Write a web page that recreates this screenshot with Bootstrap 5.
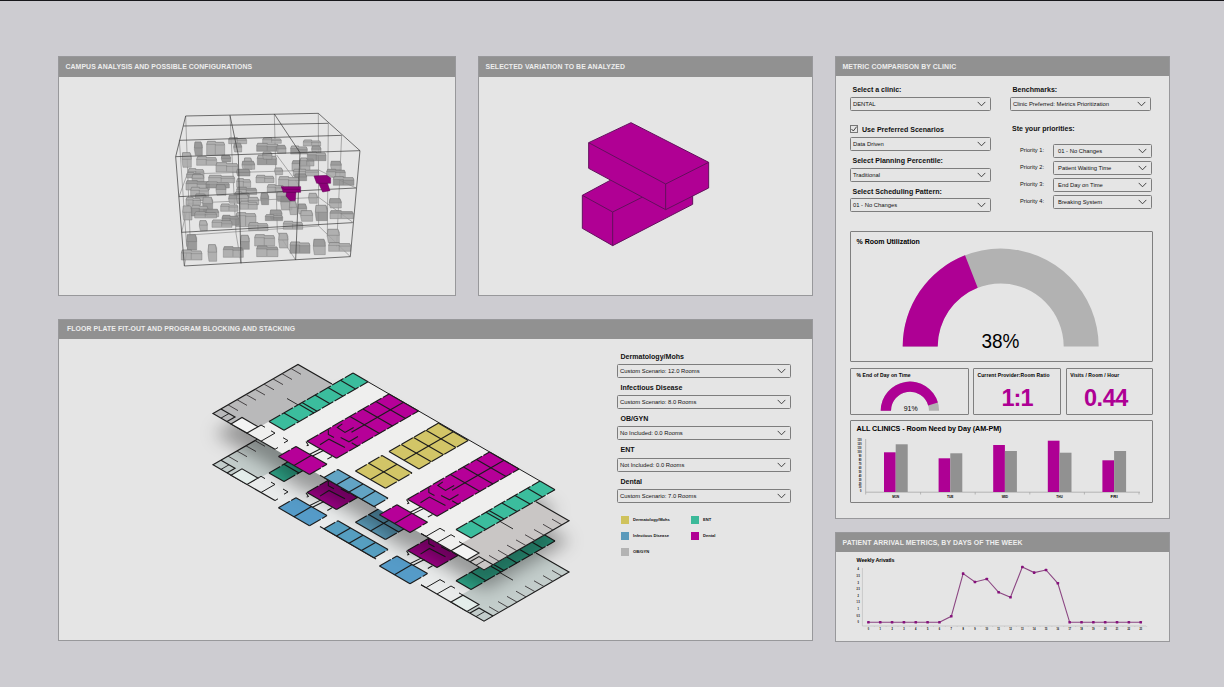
<!DOCTYPE html>
<html lang="en">
<head>
<meta charset="utf-8">
<meta name="viewport" content="width=device-width, initial-scale=1">
<title>Clinic planning dashboard</title>
<link href="https://cdn.jsdelivr.net/npm/bootstrap@5.3.0/dist/css/bootstrap.min.css" rel="stylesheet">
<style>
  body{background:#cdccd1;font-family:"Liberation Sans",Arial,sans-serif;color:#111;width:1224px;height:687px;overflow:hidden;line-height:1}
  .board{border-top:1px solid #17171b;padding:55px 54px 0 58px;height:687px;gap:22px}
  .left-side{width:755px}
  .right-side{width:335px}
  .panel{border:1px solid #98989b;border-radius:0;background:#e5e5e5}
  .panel .card-header{background:#919191;color:#ededed;border:0;border-radius:0;height:19.5px;padding:0 6.5px;font-size:6.9px;letter-spacing:.08px;font-weight:700;line-height:19.5px;white-space:nowrap}
  .p-campus{width:398px;height:240px}
  .p-variation{width:335.5px;height:240px}
  .p-variation .card-header{padding-left:7px}
  .p-floor{width:755px;height:322px;margin-top:23px}
  .p-floor .card-header{padding-left:8px;height:18.5px;line-height:18.5px}
  .p-metric{height:463px}
  .p-metric .card-header{height:19px;line-height:19px}
  .p-arrival{height:110.5px;margin-top:12.5px}
  svg{display:block}
  .pick{height:14px;border:1px solid #7d7d7d;border-radius:1.5px;background:#e5e5e5;font-size:5.85px;color:#111;padding:0 4px 0 2px;line-height:12px;white-space:nowrap;width:100%}
  .cap{font-size:7.05px;font-weight:700;white-space:nowrap;padding-left:2.5px}
  .floor-form{width:174px;margin-left:8px;padding-top:8px}
  .floor-form .cap{height:17.25px;line-height:19px;padding-left:3.5px}
  .legend-key{width:8px;height:8px}
  .legend-row{font-size:4.1px;font-weight:700;height:16.2px}
  .legend-row>div{width:70px;gap:4.5px}
  .metric-left{width:140.5px}
  .metric-right{width:142px}
  .form-zone{padding:0 17px 0 14px;height:155px}
  .prio{height:14px;margin-bottom:2.95px;font-size:5.7px}
  .prio .pick{width:99.5px;padding-left:4.5px}
  .prio span.who{width:25.5px;white-space:nowrap}
  .tick-box{width:8px;height:8px;border:1px solid #777}
  .tile{border:1px solid #7f7f7f;border-radius:1px}
</style>
</head>
<body>
<svg width="0" height="0" class="position-absolute">
  <symbol id="chev" viewBox="0 0 9 6"><path d="M.7.9 4.5 4.8 8.3.9" fill="none" stroke="#333" stroke-width=".9"/></symbol>
</svg>
<main class="board d-flex">
  <div class="left-side">
    <div class="d-flex justify-content-between">
      <section class="card panel p-campus">
        <div class="card-header">CAMPUS ANALYSIS AND POSSIBLE CONFIGURATIONS</div>
        <svg id="campus" width="396" height="218" viewBox="59 77 396 218"></svg>
      </section>
      <section class="card panel p-variation">
        <div class="card-header">SELECTED VARIATION TO BE ANALYZED</div>
        <svg width="333" height="218" viewBox="479 77 333 218">
          <g transform="translate(560 110) scale(.3333)" fill="#b00094" stroke="#62105c" stroke-width="3" stroke-linejoin="round">
            <path d="M67 256 160 206 398 252V283L158 407 67 355Z"/>
            <path d="M67 256 158 306 250 260M158 306V407" fill="none"/>
            <path d="M86 98 213 38 446 157V234L317 299 86 175Z"/>
            <path d="M86 98 317 222 446 157M317 222V299" fill="none"/>
          </g>
        </svg>
      </section>
    </div>
    <section class="card panel p-floor">
      <div class="card-header">FLOOR PLATE FIT-OUT AND PROGRAM BLOCKING AND STACKING</div>
      <div class="d-flex">
        <svg id="floor" width="550" height="301" viewBox="59 338.5 550 301"></svg>
        <div class="floor-form">
          <div class="cap">Dermatology/Mohs</div>
          <div class="pick d-flex justify-content-between align-items-center"><span>Custom Scenario: 12.0 Rooms</span><svg width="9" height="6"><use href="#chev"/></svg></div>
          <div class="cap">Infectious Disease</div>
          <div class="pick d-flex justify-content-between align-items-center"><span>Custom Scenario: 8.0 Rooms</span><svg width="9" height="6"><use href="#chev"/></svg></div>
          <div class="cap">OB/GYN</div>
          <div class="pick d-flex justify-content-between align-items-center"><span>No Included: 0.0 Rooms</span><svg width="9" height="6"><use href="#chev"/></svg></div>
          <div class="cap">ENT</div>
          <div class="pick d-flex justify-content-between align-items-center"><span>Not Included: 0.0 Rooms</span><svg width="9" height="6"><use href="#chev"/></svg></div>
          <div class="cap">Dental</div>
          <div class="pick d-flex justify-content-between align-items-center"><span>Custom Scenario: 7.0 Rooms</span><svg width="9" height="6"><use href="#chev"/></svg></div>
          <div style="padding:9px 0 0 3.5px">
            <div class="legend-row d-flex align-items-center"><div class="d-flex align-items-center"><i class="legend-key" style="background:#cfc25c"></i>Dermatology/Mohs</div><div class="d-flex align-items-center"><i class="legend-key" style="background:#3bb999"></i>ENT</div></div>
            <div class="legend-row d-flex align-items-center"><div class="d-flex align-items-center"><i class="legend-key" style="background:#5b9abb"></i>Infectious Disease</div><div class="d-flex align-items-center"><i class="legend-key" style="background:#b00094"></i>Dental</div></div>
            <div class="legend-row d-flex align-items-center"><div class="d-flex align-items-center"><i class="legend-key" style="background:#b3b3b3"></i>OB/GYN</div></div>
          </div>
        </div>
      </div>
    </section>
  </div>

  <div class="right-side">
    <section class="card panel p-metric">
      <div class="card-header">METRIC COMPARISON BY CLINIC</div>
      <div class="form-zone d-flex justify-content-between">
        <div class="metric-left">
          <div class="cap" style="height:21.2px;line-height:28px">Select a clinic:</div>
          <div class="pick d-flex justify-content-between align-items-center"><span>DENTAL</span><svg width="9" height="6"><use href="#chev"/></svg></div>
          <div class="cap d-flex align-items-end p-0" style="height:25.6px;padding-bottom:4px!important;gap:4px"><span class="tick-box d-block"><svg width="6" height="6" viewBox="0 0 6 6"><path d="M.5 3 2.3 5 5.7.6" fill="none" stroke="#333" stroke-width=".9"/></svg></span><span>Use Preferred Scenarios</span></div>
          <div class="pick d-flex justify-content-between align-items-center"><span>Data Driven</span><svg width="9" height="6"><use href="#chev"/></svg></div>
          <div class="cap" style="height:16.8px;line-height:19.5px">Select Planning Percentile:</div>
          <div class="pick d-flex justify-content-between align-items-center"><span>Traditional</span><svg width="9" height="6"><use href="#chev"/></svg></div>
          <div class="cap" style="height:16.6px;line-height:19.5px">Select Scheduling Pattern:</div>
          <div class="pick d-flex justify-content-between align-items-center"><span>01 - No Changes</span><svg width="9" height="6"><use href="#chev"/></svg></div>
        </div>
        <div class="metric-right">
          <div class="cap" style="height:21.2px;line-height:28px">Benchmarks:</div>
          <div class="pick d-flex justify-content-between align-items-center" style="width:140.5px"><span>Clinic Preferred: Metrics Prioritization</span><svg width="9" height="6"><use href="#chev"/></svg></div>
          <div class="cap" style="height:32.5px;line-height:36px;padding-left:2px">Ste your priorities:</div>
          <div class="prio d-flex justify-content-end align-items-center" style="gap:7px"><span class="who">Priority 1:</span><div class="pick d-flex justify-content-between align-items-center"><span>01 - No Changes</span><svg width="9" height="6"><use href="#chev"/></svg></div></div>
          <div class="prio d-flex justify-content-end align-items-center" style="gap:7px"><span class="who">Priority 2:</span><div class="pick d-flex justify-content-between align-items-center"><span>Patient Waiting Time</span><svg width="9" height="6"><use href="#chev"/></svg></div></div>
          <div class="prio d-flex justify-content-end align-items-center" style="gap:7px"><span class="who">Priority 3:</span><div class="pick d-flex justify-content-between align-items-center"><span>End Day on Time</span><svg width="9" height="6"><use href="#chev"/></svg></div></div>
          <div class="prio d-flex justify-content-end align-items-center" style="gap:7px"><span class="who">Priority 4:</span><div class="pick d-flex justify-content-between align-items-center"><span>Breaking System</span><svg width="9" height="6"><use href="#chev"/></svg></div></div>
        </div>
      </div>
      <div style="padding:0 16px 0 14px">
        <div class="tile" style="height:130.5px">
          <svg width="301" height="128" viewBox="851 232.5 301 128">
            <text x="856.5" y="244.6" font-size="7" font-weight="700">% Room Utilization</text>
            <path d="M902.7 347A98 98 0 0 1 1098.7 347H1063.7A63 63 0 0 0 937.7 347Z" fill="#b2b2b2"/>
            <path d="M902.7 347A98 98 0 0 1 965 255.8L977.7 288.3A63 63 0 0 0 937.7 347Z" fill="#ae0094"/>
            <text x="1000.5" y="348.6" font-size="20" text-anchor="middle" textLength="38" lengthAdjust="spacingAndGlyphs">38%</text>
          </svg>
        </div>
        <div class="d-flex justify-content-between" style="margin:6px 0 4.5px">
          <div class="tile" style="width:118.5px;height:47.5px">
            <svg width="116" height="45" viewBox="851 369 116 45">
              <text x="856.5" y="376.6" font-size="5" font-weight="700" textLength="54">% End of Day on Time</text>
              <path d="M880.7 410.7A29.2 29.2 0 0 1 939.1 410.7H929A19 19 0 0 0 891 410.7Z" fill="#b2b2b2"/>
              <path d="M880.7 410.7A29.2 29.2 0 0 1 937.9 402.5L928.2 405.4A19 19 0 0 0 891 410.7Z" fill="#ae0094"/>
              <text x="910.7" y="411" font-size="7" text-anchor="middle">91%</text>
            </svg>
          </div>
          <div class="tile" style="width:87.5px;height:47.5px">
            <svg width="85" height="45" viewBox="974 369 85 45">
              <text x="977.5" y="376.6" font-size="5" font-weight="700" textLength="72">Current Provider:Room Ratio</text>
              <text x="1017.5" y="406" font-size="23.5" font-weight="700" fill="#ae0094" text-anchor="middle" textLength="32">1:1</text>
            </svg>
          </div>
          <div class="tile" style="width:87.5px;height:47.5px">
            <svg width="85" height="45" viewBox="1066.5 369 85 45">
              <text x="1069.7" y="376.6" font-size="5" font-weight="700" textLength="49">Visits / Room / Hour</text>
              <text x="1105.7" y="406" font-size="23.5" font-weight="700" fill="#ae0094" text-anchor="middle" textLength="44.5">0.44</text>
            </svg>
          </div>
        </div>
        <div class="tile" style="height:83.5px">
          <svg id="bars" width="301" height="81" viewBox="851 421 301 81">
            <text x="856.5" y="431" font-size="7.2" font-weight="700" textLength="145">ALL CLINICS - Room Need by Day (AM-PM)</text>
          </svg>
        </div>
      </div>
    </section>
    <section class="card panel p-arrival">
      <div class="card-header">PATIENT ARRIVAL METRICS, BY DAYS OF THE WEEK</div>
      <svg id="line" width="333" height="89" viewBox="836 552 333 89">
        <text x="856.5" y="561.7" font-size="5.4" font-weight="700" textLength="38">Weekly Arivatls</text>
      </svg>
    </section>
  </div>
</main>
<script src="https://cdn.jsdelivr.net/npm/bootstrap@5.3.0/dist/js/bootstrap.bundle.min.js"></script>
<script>
const put = (id, s) => document.getElementById(id).insertAdjacentHTML('beforeend', s);

/* Room need by day */
(() => {
  const am = [452.3, 458.3, 445, 440.7, 460.3], pm = [444.3, 453.3, 451, 452.7, 451], days = ['MON','TUE','WED','THU','FRI'];
  let s = '<path d="M865.7 439V494.5M865.7 492.2H1140" stroke="#a8a8a8" stroke-width=".8" fill="none"/>';
  days.forEach((d, i) => {
    const x = 884 + i * 54.6;
    s += `<rect x="${x}" y="${am[i]}" width="11.7" height="${492 - am[i]}" fill="#ae0094"/>`
      + `<rect x="${x + 11.7}" y="${pm[i]}" width="12" height="${492 - pm[i]}" fill="#919191"/>`
      + `<path d="M${x + 36.6} 492v2.5" stroke="#a8a8a8" stroke-width=".8"/>`
      + `<text x="${x + 11.7}" y="498.2" font-size="3.3" font-weight="700" text-anchor="middle" textLength="${i % 4 ? 6.4 : 7}" lengthAdjust="spacingAndGlyphs">${d}</text>`;
  });
  for (let i = 0; i < 14; i++) s += `<text x="861.5" y="${492.4 - i * 3.92}" font-size="3" font-weight="700" text-anchor="end" textLength="${i ? (i > 9 ? 4 : 2.8) : 1.4}" lengthAdjust="spacingAndGlyphs">${i * 10}</text>`;
  put('bars', s);
})();

/* Weekly arrivals */
(() => {
  const ys = [0,0,0,0,0,0,0,6,48.7,40.3,43.3,30,25,55.3,49.7,52.3,39,0,0,0,0,0,0,0];
  const pt = ys.map((y, i) => [868.4 + i * 11.84, 622.3 - y]);
  let s = '<path d="M862.4 568V626H1146" stroke="#bdbdbd" stroke-width=".7" fill="none"/>';
  s += `<polyline points="${pt.join(' ')}" fill="none" stroke="#8b4682" stroke-width="1.1"/>`;
  pt.forEach(([x, y], i) => {
    s += `<rect x="${x - 1.3}" y="${y - 1.3}" width="2.6" height="2.6" rx=".6" fill="#86117b"/>`
      + `<path d="M${x + 5.9} 626v1" stroke="#bdbdbd" stroke-width=".5"/>`
      + `<text x="${x}" y="630.2" font-size="2.8" font-weight="700" text-anchor="middle" textLength="${i > 9 ? 2.6 : 1.4}" lengthAdjust="spacingAndGlyphs">${i}</text>`;
  });
  ['0','0.5','1','1.5','2','2.5','3','3.5','4'].forEach((t, i) => { s += `<text x="858.2" y="${623.2 - i * 6.6}" font-size="2.7" font-weight="700" text-anchor="middle" textLength="${t.length > 1 ? 3.2 : 1.4}" lengthAdjust="spacingAndGlyphs">${t}</text>`; });
  put('line', s);
})();

/* Campus massing inside a wire frame, drawn at three units to a pixel */
(() => {
  const wires = 'M77 48 475 40 600 152 47 170ZM70 78 505 70M58 121 545 106M210 46 235 165M343 42 420 158'
    + 'M47 170 73 498M235 165 243 490M420 158 407 480M600 152 571 470M73 498 571 470M57 290 588 264M65 397 578 368';
  const faint = 'M77 48 90 405M210 46 228 400M343 42 352 395M475 40 476 378M505 70 502 410M545 106 530 440M58 121 80 440M90 405 476 378M82 222 476 210M85 310 476 292M90 405 73 498M476 378 571 470M476 292 580 368M85 310 65 397M476 210 588 264M82 222 57 290M228 400 243 490M352 395 407 480M350 165 420 260';
  const blocks = [[103,126,24,40],[140,124,54,42],[206,113,54,18],[221,130,24,26],[290,130,66,24],[308,114,56,16],[350,136,28,24],[430,120,52,18],[392,138,50,24],[455,138,28,22],[66,158,28,44],[110,170,60,26],[184,166,28,20],[168,188,66,28],[252,174,24,34],[246,184,38,24],[292,166,58,28],[308,156,28,22],[396,182,54,30],[420,174,42,24],[442,156,56,26],[512,184,32,26],[84,206,48,26],[80,218,44,16],[230,208,40,20],[344,204,24,20],[400,208,76,20],[500,208,56,24],[520,230,62,26],[96,224,36,24],[78,242,70,28],[146,226,78,22],[138,246,70,18],[168,254,30,32],[230,236,42,26],[288,226,54,22],[404,222,36,20],[356,230,62,34],[322,254,50,24],[230,262,60,22],[224,276,44,18],[92,262,54,28],[106,282,32,20],[78,292,44,24],[128,292,30,42],[206,286,38,24],[230,284,36,26],[264,292,32,22],[302,280,24,34],[182,312,52,22],[240,304,52,24],[362,286,34,44],[350,276,40,28],[446,280,26,30],[508,296,36,28],[68,318,28,42],[94,316,50,32],[138,328,38,22],[104,336,66,18],[228,338,60,42],[186,346,50,30],[156,360,60,22],[118,362,24,30],[330,330,36,28],[316,344,52,18],[388,304,22,40],[414,312,26,30],[422,332,36,32],[466,316,36,46],[510,332,70,24],[266,368,58,24],[370,364,58,24],[80,404,30,46],[64,450,62,30],[144,434,26,50],[190,440,60,32],[242,406,26,42],[284,404,60,34],[290,438,64,32],[356,400,28,44],[390,426,60,34],[460,418,36,46],[502,388,36,40],[506,428,66,26]];
  const shape = ([x, y, w, h], front, top) => {
    const t = Math.min(9, h * .32), m = x + w * .48;
    if (w > 40) return `<path d="M${x} ${y + t}l3-${t}H${m}v3H${x + w - 3}l3 ${t}V${y + h}H${x}Z" fill="${front}"/><path d="M${x} ${y + t}l3-${t}H${m}v3H${x + w - 3}l3 ${t - 1}H${m}v-2Z" fill="${top}"/><path d="M${m} ${y + t}V${y + h - 2}" fill="none"/>`;
    return `<path d="M${x + 2} ${y}h${w - 6}l4 ${t}V${y + h}H${x + 3}L${x} ${y + h * .55}Z" fill="${front}"/><path d="M${x + 2} ${y}h${w - 6}l4 ${h * .45}H${x}Z" fill="${top}"/>`;
  };
  let s = `<g transform="translate(160 100) scale(.3333)"><path d="${faint}" fill="none" stroke="#777" stroke-width="1.7"/><g fill-opacity=".84" stroke="#757575" stroke-width="1.2">`;
  blocks.forEach((b, i) => { s += shape(b, i % 4 ? '#a6a6a6' : '#8c8c8c', i % 3 ? '#b0b0b0' : '#989898'); });
  s += `</g><path d="${wires}" fill="none" stroke="#3a3a3a" stroke-width="2.1"/>`
    + '<g fill="#8d0078" stroke="#5d0050" stroke-width="1.5"><path d="M380 276H408L406 302H390L378 288Z"/><path d="M364 260H422V277H370Z"/><path d="M364 260 372 268H420"/>'
    + '<path d="M474 246 500 244 510 272 488 276Z"/><path d="M462 228 500 226 512 234V250H470Z"/></g></g>';
  put('campus', s);
})();

/* Two stacked floor plates in isometric projection: u runs down-right, v runs up-right */
(() => {
  const P = (u, v) => (213 + u + v).toFixed(1) + ' ' + (413 + .577 * (u - v)).toFixed(1);
  const path = a => 'M' + a.map(p => P(...p)).join('L');
  const ln = (a, extra = '') => `<path d="${path(a)}" fill="none" ${extra}/>`;
  const outline = [[0,0],[0,85],[34,85],[34,105],[238,105],[238,85],[271,85],[271,0],[201,0],[201,-4.5],[171,-4.5],[171,0],[101,0],[101,-4.5],[70,-4.5],[70,0]];
  const block = (us, vs, fill, walls = 1) => {
    const u0 = us[0], u1 = us.at(-1), v0 = vs[0], v1 = vs.at(-1);
    let s = `<path d="${path([[u0,v0],[u0,v1],[u1,v1],[u1,v0]])}Z" fill="${fill}" stroke="none"/>`;
    s += ln([[u0,v0],[u0,v1]], 'stroke-dasharray="13 1.6"') + ln([[u1,v0],[u1,v1]], 'stroke-dasharray="13 1.6"') + ln([[u0,v0],[u1,v0]]) + ln([[u0,v1],[u1,v1]]);
    us.slice(1,-1).forEach(u => s += ln([[u, walls == 2 ? 53 : v0],[u,v1]]));
    vs.slice(1,-1).forEach(v => s += ln([[u0,v],[u1,v]]));
    return s;
  };
  const dental = (du, fill) => block([71 + du, 85.5 + du, 100.5 + du], [23,66,79,92,105], fill, 2)
    + `<g transform="translate(${200 + du} ${355 + du * .577}) scale(.3333)" fill="none" stroke-width="3.2">`
    + '<path d="M360 268 387 251 435 276M385 222V237L402 246M427 205 412 216 435 231 461 216M422 246 447 259 474 243M455 262 474 273M318 258 325 269 320 271M328 297 362 280M336 302 372 284M382 311 396 303"/></g>';
  const plate = low => {
    const c = low ? {g:'#c3cdcb', m:'#a2008a', t:'#2fa78a', y:'#5c9dbb', b:'#569fc1', lm:'#559bc8', body:'#e9ebeb', w:'#e3edea'} : {g:'#b9b9ba', m:'#b60098', t:'#3bbd9d', y:'#d2c567', b:'#62a4c4', lm:'#b60098', body:'#efefee', w:'#f3f3f3'};
    let s = `<path d="${path(outline)}Z" fill="${c.body}" stroke="none"/>`;
    s += `<path d="${path([[0,0],[0,85],[35,85],[35,11],[18,11],[18,0]])}Z" fill="${c.g}" stroke="none"/>`;
    s += `<path d="${path([[237,85],[271,85],[271,0],[254,0],[254,12],[237,12]])}Z" fill="${low ? c.g : '#c9c6c5'}" stroke="none"/>`;
    s += ln([[62,0],[0,0],[0,85],[34,85]]) + ln([[50,105],[222,105]], 'stroke-width="1"') + ln([[238,85],[271,85],[271,0],[254,0]]) + ln([[208,0],[254,0]]);
    for (let v = 15; v < 84; v += 9) s += ln([[0,v],[10,v]], 'stroke="#3a3638" stroke-width=".9"') + ln([[271,v],[261,v]], 'stroke="#3a3638" stroke-width=".9"');
    s += ln([[0,8],[14,8],[14,0]]) + ln([[8,0],[8,8]], 'stroke-width=".9"') + ln([[257,0],[257,9],[271,9]]) + ln([[263,0],[263,9]], 'stroke-width=".9"');
    s += ln([[24,50],[37,50]], 'stroke-width=".9"') + ln([[237,50],[250,50]], 'stroke-width=".9"');
    /* support rooms at both ends */
    s += `<path d="${path([[18,0],[18,11],[34,11],[34,0]])}Z" fill="${c.w}" stroke-width="1.1"/><path d="${path([[238,0],[238,12],[254,12],[254,0]])}Z" fill="${c.w}" stroke-width="1.1"/>`;
    s += '<g stroke-width="1">' + ln([[34,11],[34,14],[38,14]]) + ln([[48,0],[48,14],[44,14]]) + ln([[62,0],[62,3]]) + ln([[56,14],[61,14],[61,10]]) + ln([[208,0],[213,0],[213,14],[218,14]]) + ln([[224,0],[224,14],[228,14]]) + ln([[238,12],[234,12]]) + '</g>';
    s += block([35,50], [21,36,51,54,67,80,92.5,105], c.t) + block([222,237], [21,36,51,54,67,80,92.5,105], c.t);
    s += dental(0, c.m) + dental(100.5, c.m);
    s += block([121,136,151], [55,67.3,79.6,92,104.3], c.y) + block([121,136,151], [21.5,34.7,48], c.y);
    s += block([70,85.5,101], [-4.5,13], c.lm) + block([171,186,201.5], [-4.5,13], c.lm);
    s += ln([[107,0],[163,0]]) + block([111,123.5,136,148.5,161], [0,14], c.b);
    return s;
  };
  put('floor', `<defs><filter id="soft" x="-20%" y="-20%" width="140%" height="140%"><feGaussianBlur stdDeviation="8.5"/></filter></defs>
    <g stroke="#1c1c1c" stroke-width="1.15"><g transform="translate(0 51.3)">${plate(true)}</g>
    <path d="${path(outline)}Z" transform="translate(1 20)" fill="#000" fill-opacity=".34" stroke="none" filter="url(#soft)"/>
    ${plate(false)}</g>`);
})();
</script>
</body>
</html>
